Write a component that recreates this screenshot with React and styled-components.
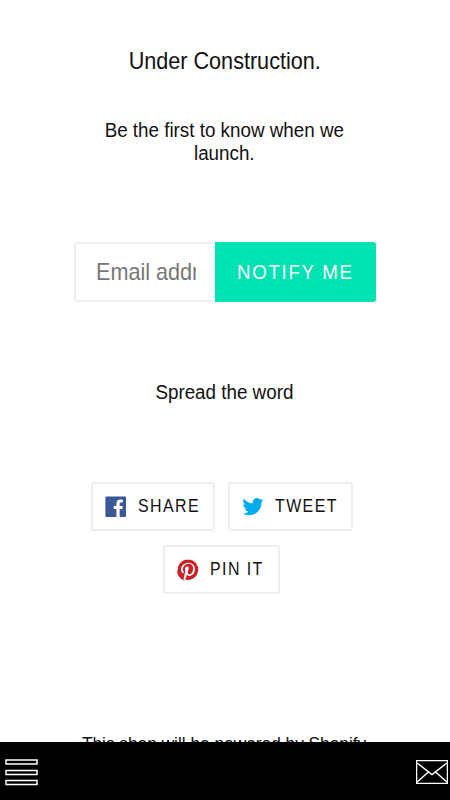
import React from 'react';
import styled, { createGlobalStyle } from 'styled-components';

const shares = [
    {
        name: 'Share',
        color: '#3b5998',
        width: 124,
        path: 'M18.05.811q.439 0 .744.305t.305.744v16.637q0 .439-.305.744t-.744.305h-4.732v-7.221h2.415l.342-2.854h-2.757v-1.83q0-.659.293-1t1.073-.342h1.488V3.762q-.976-.098-2.171-.098-1.634 0-2.635.964t-1 2.72V9.47H7.951v2.854h2.415v7.221H1.413q-.439 0-.744-.305t-.305-.744V1.859q0-.439.305-.744T1.413.81H18.05z'
    },
    {
        name: 'Tweet',
        color: '#00aced',
        width: 125,
        path: 'M19.551 4.208q-.815 1.202-1.956 2.038 0 .082.02.255t.02.255q0 1.589-.469 3.179t-1.426 3.036-2.272 2.567-3.158 1.793-3.963.672q-3.301 0-6.031-1.773.571.041.937.041 2.751 0 4.911-1.671-1.284-.02-2.292-.784T2.456 11.85q.346.082.754.082.55 0 1.039-.163-1.365-.285-2.262-1.365T1.09 7.918v-.041q.774.408 1.773.448-.795-.53-1.263-1.396t-.469-1.864q0-1.019.509-1.997 1.487 1.854 3.596 2.924T9.81 7.184q-.143-.509-.143-.897 0-1.63 1.161-2.781t2.832-1.151q.815 0 1.569.326t1.284.917q1.345-.265 2.506-.958-.428 1.386-1.732 2.18 1.243-.163 2.262-.611z'
    },
    {
        name: 'Pin it',
        color: '#cb2027',
        width: 117,
        path: 'M9.958.811q1.903 0 3.635.744t2.988 2 2 2.988.744 3.635q0 2.537-1.256 4.696t-3.415 3.415-4.696 1.256q-1.39 0-2.659-.366.707-1.147.951-2.025l.659-2.561q.244.463.903.817t1.39.354q1.464 0 2.622-.842t1.793-2.305.634-3.293q0-2.171-1.671-3.769t-4.257-1.598q-1.586 0-2.903.537T5.298 5.897 4.066 7.775t-.427 2.037q0 1.268.476 2.22t1.427 1.342q.146.073.244.037t.146-.177q.171-.683.195-.805.073-.268-.146-.512-.683-.805-.683-2.049 0-2.049 1.415-3.537t3.696-1.488q2 0 3.122 1.098t1.122 2.854q0 2.268-.914 3.854t-2.354 1.585q-.805 0-1.305-.585t-.329-1.366q.122-.488.354-1.232t.378-1.305.146-.976q0-.659-.366-1.098t-1.024-.439q-.854 0-1.427.768t-.573 1.939q0 .976.342 1.659l-1.317 5.659q-.244 1.024-.146 2.537-2.902-1.268-4.695-3.927T.634 10.177q0-2.537 1.256-4.696t3.415-3.415T10.001.81z'
    }
];

export default function App() {
    return (
        <>
            <GlobalStyle />
            <Page>
                <Title>Under Construction.</Title>
                <Text top={44}>Be the first to know when we<br />launch.</Text>
                <Form>
                    <Field><Placeholder>Email address</Placeholder></Field>
                    <Notify type="button"><span>NOTIFY ME</span></Notify>
                </Form>
                <Text top={79}>Spread the word</Text>
                <ShareList>
                    {
                        shares.map(item =>
                        (<ShareButton key={item.name} type="button" width={item.width}>
                            <svg viewBox="0 0 20 20" fill={item.color}><path d={item.path} /></svg>
                            <span>{item.name}</span>
                        </ShareButton>)
                        )
                    }
                </ShareList>
                <Powered>This shop will be powered by Shopify</Powered>
            </Page>
            <BottomBar>
                <svg width="34" height="28" viewBox="0 0 34 28">
                    <path d="M1 2h31v4h-31zM1 12.5h31v4h-31zM1 22.5h31v4h-31z" />
                </svg>
                <svg width="32" height="24" viewBox="0 0 32 24">
                    <path d="M.5.5h31v23H.5zM.5 2.5L16 14.5 31.5 2.5M.5 22.5L12.5 12M31.5 22.5L19.5 12" />
                </svg>
            </BottomBar>
        </>
    )
}

const GlobalStyle = createGlobalStyle`
    * {
        box-sizing: border-box;
    }
    body {
        margin: 0;
        background: #fff;
        color: #111;
        font-family: "Liberation Sans", Arial, sans-serif;
    }
    button {
        font-family: inherit;
        padding: 0;
    }
`;

const Page = styled.main`
    height: 800px;
    overflow: hidden;
    display: flex;
    flex-direction: column;
    align-items: center;
    padding: 47px 1px 0 0;
`;

const Title = styled.h1`
    margin: 0;
    font-size: 24px;
    font-weight: normal;
    line-height: 28px;
    transform: scaleX(0.9);
`;

const Text = styled.p`
    margin: ${props => props.top}px 0 0;
    font-size: 20px;
    line-height: 23px;
    text-align: center;
    transform: scaleX(0.94);
`;

const Form = styled.div`
    display: flex;
    width: 302px;
    height: 60px;
    margin-top: 77px;
`;

const Field = styled.div`
    width: 141.5px;
    padding: 0 20px 0 20px;
    border: 2px solid #eee;
    border-right: 0;
    border-radius: 3px 0 0 3px;
    overflow: hidden;
`;

const Placeholder = styled.div`
    width: 111px;
    overflow: hidden;
    white-space: nowrap;
    color: #777;
    font-size: 24px;
    line-height: 56px;
    transform: scaleX(0.9);
    transform-origin: left;
`;

const Notify = styled.button`
    flex: 1;
    border: 0;
    border-radius: 0 3px 3px 0;
    background: #00e2b1;
    color: #fff;
    font-size: 20px;
    letter-spacing: 1.8px;
    span {
        display: inline-block;
        transform: scaleX(0.935);
    }
`;

const ShareList = styled.div`
    display: flex;
    flex-wrap: wrap;
    justify-content: center;
    gap: 14px 13px;
    width: 300px;
    margin: 78px 6px 0 0;
`;

const ShareButton = styled.button`
    display: flex;
    align-items: center;
    width: ${props => props.width}px;
    height: 49px;
    padding-left: 12px;
    border: 2px solid #eee;
    border-radius: 3px;
    background: #fff;
    color: #111;
    font-size: 18px;
    letter-spacing: 1.6px;
    text-transform: uppercase;
    svg {
        flex: none;
        width: 22px;
        height: 23px;
        margin-right: 11px;
    }
    span {
        white-space: nowrap;
        transform: scaleX(0.885);
        transform-origin: left;
    }
`;

const Powered = styled.p`
    margin: 139px 0 0;
    font-size: 18px;
    line-height: 23px;
    white-space: nowrap;
    transform: scaleX(0.96);
`;

// stays over the page while it scrolls
const BottomBar = styled.nav`
    position: fixed;
    left: 0;
    right: 0;
    bottom: 0;
    height: 58px;
    display: flex;
    align-items: center;
    justify-content: space-between;
    padding: 2px 2px 0 5px;
    background: #000;
    svg {
        fill: none;
        stroke: #fff;
        stroke-width: 1.5;
    }
`;
